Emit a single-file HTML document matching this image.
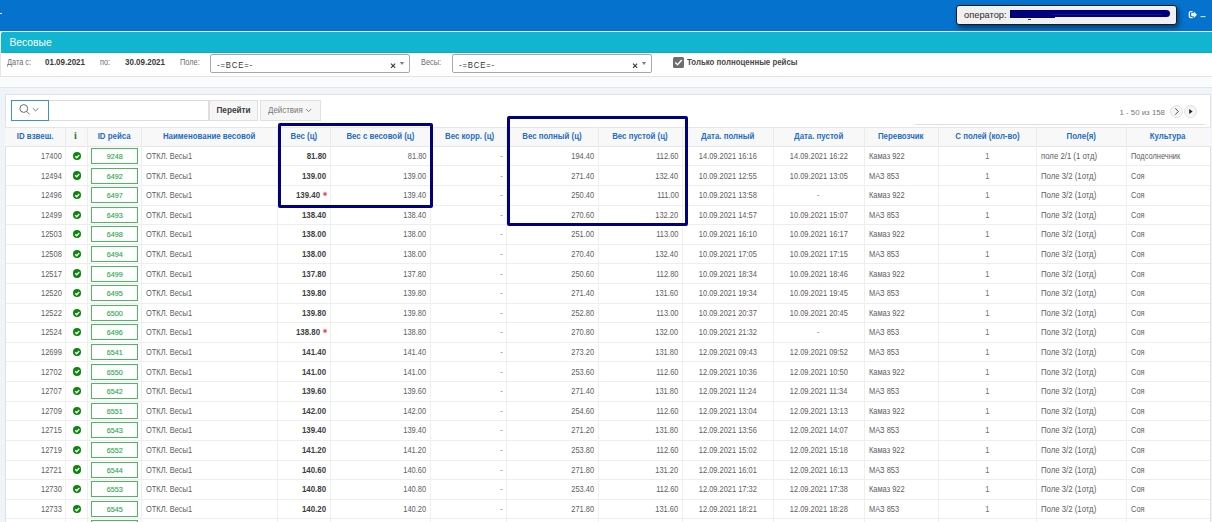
<!DOCTYPE html><html><head><meta charset="utf-8"><style>
*{box-sizing:border-box;margin:0;padding:0}
html,body{width:1212px;height:522px;overflow:hidden;background:#f0f4f9;font-family:"Liberation Sans",sans-serif;color:#404040}
.a{position:absolute}
.t{display:inline-block;transform-origin:0 50%}
.r .t{transform-origin:100% 50%}
.m .t{transform-origin:50% 50%}
.topbar{left:0;top:0;width:1212px;height:31px;background:#0572ce}
.tline{left:0;top:31px;width:1212px;height:1px;background:#e4e7ea}
.teal{left:1px;top:32px;width:1211px;height:21px;background:#12b5d0;border-top-left-radius:2px;border-bottom:1px solid #0eabc5}
.ttl{left:9.5px;top:32px;height:21px;line-height:21px;font-size:10.3px;color:#fff}
.fpanel{left:0;top:53px;width:1212px;height:24px;background:#fff;border-left:1px solid #e6e6e6;border-bottom:1px solid #e2e2e2}
.band{left:0;top:77px;width:1212px;height:11px;background:#fafbfc;border-bottom:1px solid #e3e6ea}
.lbl{font-size:8.2px;color:#6b6b6b;line-height:10px}
.lbl .t{transform:scaleX(.9)}
.bld{font-size:8.2px;font-weight:bold;color:#3a3a3a;line-height:10px}
.bld .t{transform:scaleX(.975)}
.sel{background:#fff;border:1px solid #a8a8a8;border-radius:2px}
.selt{font-size:9.7px;color:#333;line-height:10px;letter-spacing:1.1px}
.selt .t{transform:scaleX(.8)}
.tpanel{left:5px;top:94px;width:1206px;height:440px;background:#fff;border:1px solid #e2e2e2}
.btn{background:#f6f6f6;border:1px solid #e0e0e0;font-size:8.2px;line-height:19px;text-align:center}
.btn .t{transform:scaleX(.97)}
.hdr{left:5px;top:127px;width:1206px;height:20px;background:#f8f8f8;border-top:1px solid #e6e6e6;border-bottom:1px solid #e6e6e6}
.hl{top:127px;height:20px;width:1px;background:#ebebeb}
.ht{top:127.0px;height:20px;line-height:20px;font-size:8.2px;font-weight:bold;color:#1f6dc4;text-align:center;white-space:nowrap}
.ht .t{transform:scaleX(0.96);transform-origin:50% 50%}
.rl{height:1px;background:#eeeeee;left:6px;width:1204px}
.vl{width:1px;background:#efefef}
.c{line-height:20px;font-size:8.2px;color:#5e5e5e;white-space:nowrap}
.c .t{transform:scaleX(0.91)}
.r{text-align:right}
.dash{color:#8a8a8a}
.one{color:#707070}
.c.fld .t{transform:scaleX(.95)}
.m{text-align:center}
.b{font-weight:bold;font-size:8.2px;color:#3f3f3f}
.c.b .t{transform:scaleX(0.965)}
.gb{border:1px solid #4cb860;color:#2aa74a;font-size:7.8px;text-align:center;line-height:16.6px;-webkit-text-stroke:0.12px #2aa74a}
.gb .t{transform:scaleX(.92);transform-origin:50% 50%}
.chk{width:8.2px;height:8.2px;border-radius:50%;background:#0a870a}
.box{border:3px solid #000080;border-radius:2px}
</style></head><body>
<div class="a topbar"></div><div class="a tline"></div>
<div class="a" style="left:955.8px;top:4.8px;width:221px;height:19.8px;background:#f0f0f0;border:1px solid #1a1a1a;border-radius:3px;box-shadow:2px 3px 5px rgba(0,0,0,.45)"></div>
<div class="a" style="left:964px;top:6px;height:19.5px;line-height:19.5px;font-size:9.3px;color:#2a2a2a">оператор:</div>
<div class="a" style="left:1009.8px;top:9.8px;width:45px;height:8.4px;background:#00007c"></div>
<div class="a" style="left:1050px;top:9.8px;width:120px;height:7.6px;background:#00007c;border-radius:1px 4px 4px 1px"></div>
<div class="a" style="left:1052px;top:13.6px;width:110px;height:0.6px;background:#15158a"></div>
<div class="a" style="left:1028px;top:18.6px;width:3px;height:0.8px;background:#333"></div>
<svg class="a" style="left:1186px;top:9px" width="22" height="12"><path d="M6.6 2.7 H4.7 Q3.3 2.7 3.3 4.1 V7.2 Q3.3 8.6 4.7 8.6 H6.6" stroke="#f4f8fd" stroke-width="1.3" fill="none"/><path d="M5.2 4.1 H7.8 V2.4 L11 5.65 L7.8 8.9 V7.2 H5.2 Z" fill="#f4f8fd"/><path d="M14.6 7.6 H19.5" stroke="#d6e4f5" stroke-width="1.1"/></svg>
<div class="a" style="left:0;top:13px;width:1.5px;height:1px;background:#f4f0f0"></div>
<div class="a teal"></div><div class="a ttl">Весовые</div>
<div class="a fpanel"></div><div class="a band"></div>
<div class="a lbl" style="left:7px;top:57.5px"><span class="t">Дата с:</span></div>
<div class="a bld" style="left:45px;top:57.5px"><span class="t">01.09.2021</span></div>
<div class="a lbl" style="left:100px;top:57.5px"><span class="t">по:</span></div>
<div class="a bld" style="left:124.5px;top:57.5px"><span class="t">30.09.2021</span></div>
<div class="a lbl" style="left:180px;top:57.5px"><span class="t">Поле:</span></div>
<div class="a sel" style="left:210px;top:54px;width:199.5px;height:18.5px"></div>
<div class="a selt" style="left:217px;top:59.5px"><span class="t">-=ВСЕ=-</span></div>
<svg class="a" style="left:389.5px;top:60px" width="20" height="10"><path d="M1 3.6 L5.2 7.8 M5.2 3.6 L1 7.8" stroke="#333" stroke-width="1.05"/><path d="M9.8 1.9 H14.2 L12 5 Z" fill="#808080"/></svg>
<div class="a lbl" style="left:421px;top:57.5px"><span class="t">Весы:</span></div>
<div class="a sel" style="left:452px;top:54px;width:199.5px;height:18.5px"></div>
<div class="a selt" style="left:459px;top:59.5px"><span class="t">-=ВСЕ=-</span></div>
<svg class="a" style="left:631.5px;top:60px" width="20" height="10"><path d="M1 3.6 L5.2 7.8 M5.2 3.6 L1 7.8" stroke="#333" stroke-width="1.05"/><path d="M9.8 1.9 H14.2 L12 5 Z" fill="#808080"/></svg>
<div class="a" style="left:673px;top:56.5px;width:11px;height:11px;background:#6e6e6e;border-radius:1.5px"></div>
<svg class="a" style="left:673px;top:56.5px" width="11" height="11"><path d="M2.3 5.6 L4.5 7.8 L8.8 3" stroke="#fff" stroke-width="1.4" fill="none"/></svg>
<div class="a bld" style="left:686.5px;top:57.5px;color:#4a4a4a"><span class="t" style="transform:scaleX(.96)">Только полноценные рейсы</span></div>
<div class="a tpanel"></div>
<div class="a" style="left:49px;top:100px;width:160px;height:21px;border:1px solid #dcdcdc;border-left:none"></div>
<div class="a" style="left:11px;top:100px;width:38px;height:21px;border:1px solid #3b8ee0;background:#fff"></div>
<svg class="a" style="left:17px;top:102px" width="26" height="16"><circle cx="6.8" cy="6.5" r="3.9" stroke="#555" stroke-width="0.85" fill="none"/><path d="M9.6 9.3 L12.6 12.3" stroke="#555" stroke-width="0.85"/><path d="M15.8 6.2 L18.6 8.9 L21.5 6.2" stroke="#555" stroke-width="0.8" fill="none"/></svg>
<div class="a btn" style="left:208.5px;top:100px;width:49px;height:20.5px;font-weight:bold;color:#3c3c3c;padding-left:1px">Перейти</div>
<div class="a btn" style="left:260px;top:100px;width:60.5px;height:20.5px;color:#777;text-align:left;padding-left:7px"><span class="t">Действия</span></div>
<svg class="a" style="left:304.5px;top:107.5px" width="8" height="6"><path d="M1 1 L3.6 3.6 L6.2 1" stroke="#666" stroke-width="0.8" fill="none"/></svg>
<div class="a" style="left:1119.5px;top:107.5px;font-size:7.85px;color:#777;line-height:10px">1 - 50 из 158</div>
<div class="a" style="left:1170px;top:105px;width:13.2px;height:13.2px;border-radius:50%;background:#f5f5f5;border:1px solid #e2e2e2"></div>
<svg class="a" style="left:1170px;top:105px" width="13" height="13"><path d="M5.3 3.3 L8.3 6.5 L5.3 9.7" stroke="#444" stroke-width="0.9" fill="none"/></svg>
<div class="a" style="left:1184px;top:105px;width:13px;height:13.2px;border-radius:50%;background:#f5f5f5;border:1px solid #e2e2e2"></div>
<svg class="a" style="left:1184px;top:105px" width="13" height="13"><path d="M5.2 4 L8.6 6.5 L5.2 9 Z" fill="#222"/></svg>
<div class="a" style="left:915px;top:124px;width:290px;height:1px;background:#dedede"></div>
<div class="a hdr"></div>
<div class="a hl" style="left:65px"></div>
<div class="a hl" style="left:87px"></div>
<div class="a hl" style="left:141px"></div>
<div class="a hl" style="left:277px"></div>
<div class="a hl" style="left:330px"></div>
<div class="a hl" style="left:430px"></div>
<div class="a hl" style="left:506px"></div>
<div class="a hl" style="left:598px"></div>
<div class="a hl" style="left:682px"></div>
<div class="a hl" style="left:773px"></div>
<div class="a hl" style="left:864px"></div>
<div class="a hl" style="left:938px"></div>
<div class="a hl" style="left:1036px"></div>
<div class="a hl" style="left:1126px"></div>
<div class="a ht" style="left:5.0px;width:60px"><span class="t">ID взвеш.</span></div>
<div class="a ht" style="left:87.0px;width:54px"><span class="t">ID рейса</span></div>
<div class="a ht" style="left:141.0px;width:136px"><span class="t">Наименование весовой</span></div>
<div class="a ht" style="left:277.0px;width:53px"><span class="t">Вес (ц)</span></div>
<div class="a ht" style="left:330.0px;width:100px"><span class="t">Вес с весовой (ц)</span></div>
<div class="a ht" style="left:431.5px;width:76px"><span class="t">Вес корр. (ц)</span></div>
<div class="a ht" style="left:506.0px;width:92px"><span class="t">Вес полный (ц)</span></div>
<div class="a ht" style="left:598.0px;width:84px"><span class="t">Вес пустой (ц)</span></div>
<div class="a ht" style="left:682.0px;width:91px"><span class="t">Дата. полный</span></div>
<div class="a ht" style="left:773.0px;width:91px"><span class="t">Дата. пустой</span></div>
<div class="a ht" style="left:864.0px;width:74px"><span class="t">Перевозчик</span></div>
<div class="a ht" style="left:938.0px;width:98px"><span class="t">С полей (кол-во)</span></div>
<div class="a ht" style="left:1036.0px;width:90px"><span class="t">Поле(я)</span></div>
<div class="a ht" style="left:1126.0px;width:84px"><span class="t">Культура</span></div>
<div class="a" style="left:74px;top:131.5px;font-family:'Liberation Serif',serif;font-weight:bold;font-size:10px;line-height:8px;color:#1a7a2a">i</div>
<div class="a rl" style="top:165px"></div>
<div class="a c r" style="left:5px;top:147.00px;width:60px;padding:0 3.5px"><span class="t">17400</span></div>
<div class="a chk" style="left:72.7px;top:151.80px"></div>
<svg class="a" style="left:72.7px;top:151.80px" width="9" height="9"><path d="M2.2 4.3 L3.7 5.8 L6.2 3" stroke="#fff" stroke-width="1.3" fill="none"/></svg>
<div class="a gb" style="left:91px;top:148.00px;width:47px;height:16px"><span class="t">9248</span></div>
<div class="a c " style="left:141px;top:147.00px;width:136px;padding:0 4.5px"><span class="t">ОТКЛ. Весы1</span></div>
<div class="a c r b" style="left:277px;top:147.00px;width:53px;padding:0 3.5px"><span class="t">81.80</span></div>
<div class="a c r" style="left:330px;top:147.00px;width:100px;padding:0 3.5px"><span class="t">81.80</span></div>
<div class="a c r dash" style="left:430px;top:147.00px;width:76px;padding:0 3.5px"><span class="t">-</span></div>
<div class="a c r" style="left:506px;top:147.00px;width:92px;padding:0 3.5px"><span class="t">194.40</span></div>
<div class="a c r" style="left:598px;top:147.00px;width:84px;padding:0 3.5px"><span class="t">112.60</span></div>
<div class="a c m" style="left:682px;top:147.00px;width:91px;padding:0 0.0px"><span class="t">14.09.2021 16:16</span></div>
<div class="a c m" style="left:773px;top:147.00px;width:91px;padding:0 0.0px"><span class="t">14.09.2021 16:22</span></div>
<div class="a c " style="left:864px;top:147.00px;width:74px;padding:0 4.5px"><span class="t">Камаз 922</span></div>
<div class="a c m one" style="left:938px;top:147.00px;width:98px;padding:0 0.0px"><span class="t">1</span></div>
<div class="a c fld" style="left:1036px;top:147.00px;width:90px;padding:0 4.5px"><span class="t">поле 2/1 (1 отд)</span></div>
<div class="a c " style="left:1126px;top:147.00px;width:84px;padding:0 4.5px"><span class="t">Подсолнечник</span></div>
<div class="a rl" style="top:185px"></div>
<div class="a c r" style="left:5px;top:166.60px;width:60px;padding:0 3.5px"><span class="t">12494</span></div>
<div class="a chk" style="left:72.7px;top:171.40px"></div>
<svg class="a" style="left:72.7px;top:171.40px" width="9" height="9"><path d="M2.2 4.3 L3.7 5.8 L6.2 3" stroke="#fff" stroke-width="1.3" fill="none"/></svg>
<div class="a gb" style="left:91px;top:167.60px;width:47px;height:16px"><span class="t">6492</span></div>
<div class="a c " style="left:141px;top:166.60px;width:136px;padding:0 4.5px"><span class="t">ОТКЛ. Весы1</span></div>
<div class="a c r b" style="left:277px;top:166.60px;width:53px;padding:0 3.5px"><span class="t">139.00</span></div>
<div class="a c r" style="left:330px;top:166.60px;width:100px;padding:0 3.5px"><span class="t">139.00</span></div>
<div class="a c r dash" style="left:430px;top:166.60px;width:76px;padding:0 3.5px"><span class="t">-</span></div>
<div class="a c r" style="left:506px;top:166.60px;width:92px;padding:0 3.5px"><span class="t">271.40</span></div>
<div class="a c r" style="left:598px;top:166.60px;width:84px;padding:0 3.5px"><span class="t">132.40</span></div>
<div class="a c m" style="left:682px;top:166.60px;width:91px;padding:0 0.0px"><span class="t">10.09.2021 12:55</span></div>
<div class="a c m" style="left:773px;top:166.60px;width:91px;padding:0 0.0px"><span class="t">10.09.2021 13:05</span></div>
<div class="a c " style="left:864px;top:166.60px;width:74px;padding:0 4.5px"><span class="t">МАЗ 853</span></div>
<div class="a c m one" style="left:938px;top:166.60px;width:98px;padding:0 0.0px"><span class="t">1</span></div>
<div class="a c fld" style="left:1036px;top:166.60px;width:90px;padding:0 4.5px"><span class="t">Поле 3/2 (1отд)</span></div>
<div class="a c " style="left:1126px;top:166.60px;width:84px;padding:0 4.5px"><span class="t">Соя</span></div>
<div class="a rl" style="top:205px"></div>
<div class="a c r" style="left:5px;top:186.20px;width:60px;padding:0 3.5px"><span class="t">12496</span></div>
<div class="a chk" style="left:72.7px;top:191.00px"></div>
<svg class="a" style="left:72.7px;top:191.00px" width="9" height="9"><path d="M2.2 4.3 L3.7 5.8 L6.2 3" stroke="#fff" stroke-width="1.3" fill="none"/></svg>
<div class="a gb" style="left:91px;top:187.20px;width:47px;height:16px"><span class="t">6497</span></div>
<div class="a c " style="left:141px;top:186.20px;width:136px;padding:0 4.5px"><span class="t">ОТКЛ. Весы1</span></div>
<div class="a c r b" style="left:277px;top:186.20px;width:53px;padding:0 10px 0 0"><span class="t">139.40</span></div>
<svg class="a" style="left:322px;top:191.20px" width="6" height="6"><path d="M3 0.8 V5.2 M1.1 1.9 L4.9 4.1 M4.9 1.9 L1.1 4.1" stroke="#e8303a" stroke-width="0.9"/></svg>
<div class="a c r" style="left:330px;top:186.20px;width:100px;padding:0 3.5px"><span class="t">139.40</span></div>
<div class="a c r dash" style="left:430px;top:186.20px;width:76px;padding:0 3.5px"><span class="t">-</span></div>
<div class="a c r" style="left:506px;top:186.20px;width:92px;padding:0 3.5px"><span class="t">250.40</span></div>
<div class="a c r" style="left:598px;top:186.20px;width:84px;padding:0 3.5px"><span class="t">111.00</span></div>
<div class="a c m" style="left:682px;top:186.20px;width:91px;padding:0 0.0px"><span class="t">10.09.2021 13:58</span></div>
<div class="a c m dash" style="left:773px;top:186.20px;width:91px;padding:0 0.0px"><span class="t">-</span></div>
<div class="a c " style="left:864px;top:186.20px;width:74px;padding:0 4.5px"><span class="t">Камаз 922</span></div>
<div class="a c m one" style="left:938px;top:186.20px;width:98px;padding:0 0.0px"><span class="t">1</span></div>
<div class="a c fld" style="left:1036px;top:186.20px;width:90px;padding:0 4.5px"><span class="t">Поле 3/2 (1отд)</span></div>
<div class="a c " style="left:1126px;top:186.20px;width:84px;padding:0 4.5px"><span class="t">Соя</span></div>
<div class="a rl" style="top:224px"></div>
<div class="a c r" style="left:5px;top:205.80px;width:60px;padding:0 3.5px"><span class="t">12499</span></div>
<div class="a chk" style="left:72.7px;top:210.60px"></div>
<svg class="a" style="left:72.7px;top:210.60px" width="9" height="9"><path d="M2.2 4.3 L3.7 5.8 L6.2 3" stroke="#fff" stroke-width="1.3" fill="none"/></svg>
<div class="a gb" style="left:91px;top:206.80px;width:47px;height:16px"><span class="t">6493</span></div>
<div class="a c " style="left:141px;top:205.80px;width:136px;padding:0 4.5px"><span class="t">ОТКЛ. Весы1</span></div>
<div class="a c r b" style="left:277px;top:205.80px;width:53px;padding:0 3.5px"><span class="t">138.40</span></div>
<div class="a c r" style="left:330px;top:205.80px;width:100px;padding:0 3.5px"><span class="t">138.40</span></div>
<div class="a c r dash" style="left:430px;top:205.80px;width:76px;padding:0 3.5px"><span class="t">-</span></div>
<div class="a c r" style="left:506px;top:205.80px;width:92px;padding:0 3.5px"><span class="t">270.60</span></div>
<div class="a c r" style="left:598px;top:205.80px;width:84px;padding:0 3.5px"><span class="t">132.20</span></div>
<div class="a c m" style="left:682px;top:205.80px;width:91px;padding:0 0.0px"><span class="t">10.09.2021 14:57</span></div>
<div class="a c m" style="left:773px;top:205.80px;width:91px;padding:0 0.0px"><span class="t">10.09.2021 15:07</span></div>
<div class="a c " style="left:864px;top:205.80px;width:74px;padding:0 4.5px"><span class="t">МАЗ 853</span></div>
<div class="a c m one" style="left:938px;top:205.80px;width:98px;padding:0 0.0px"><span class="t">1</span></div>
<div class="a c fld" style="left:1036px;top:205.80px;width:90px;padding:0 4.5px"><span class="t">Поле 3/2 (1отд)</span></div>
<div class="a c " style="left:1126px;top:205.80px;width:84px;padding:0 4.5px"><span class="t">Соя</span></div>
<div class="a rl" style="top:244px"></div>
<div class="a c r" style="left:5px;top:225.40px;width:60px;padding:0 3.5px"><span class="t">12503</span></div>
<div class="a chk" style="left:72.7px;top:230.20px"></div>
<svg class="a" style="left:72.7px;top:230.20px" width="9" height="9"><path d="M2.2 4.3 L3.7 5.8 L6.2 3" stroke="#fff" stroke-width="1.3" fill="none"/></svg>
<div class="a gb" style="left:91px;top:226.40px;width:47px;height:16px"><span class="t">6498</span></div>
<div class="a c " style="left:141px;top:225.40px;width:136px;padding:0 4.5px"><span class="t">ОТКЛ. Весы1</span></div>
<div class="a c r b" style="left:277px;top:225.40px;width:53px;padding:0 3.5px"><span class="t">138.00</span></div>
<div class="a c r" style="left:330px;top:225.40px;width:100px;padding:0 3.5px"><span class="t">138.00</span></div>
<div class="a c r dash" style="left:430px;top:225.40px;width:76px;padding:0 3.5px"><span class="t">-</span></div>
<div class="a c r" style="left:506px;top:225.40px;width:92px;padding:0 3.5px"><span class="t">251.00</span></div>
<div class="a c r" style="left:598px;top:225.40px;width:84px;padding:0 3.5px"><span class="t">113.00</span></div>
<div class="a c m" style="left:682px;top:225.40px;width:91px;padding:0 0.0px"><span class="t">10.09.2021 16:10</span></div>
<div class="a c m" style="left:773px;top:225.40px;width:91px;padding:0 0.0px"><span class="t">10.09.2021 16:17</span></div>
<div class="a c " style="left:864px;top:225.40px;width:74px;padding:0 4.5px"><span class="t">Камаз 922</span></div>
<div class="a c m one" style="left:938px;top:225.40px;width:98px;padding:0 0.0px"><span class="t">1</span></div>
<div class="a c fld" style="left:1036px;top:225.40px;width:90px;padding:0 4.5px"><span class="t">Поле 3/2 (1отд)</span></div>
<div class="a c " style="left:1126px;top:225.40px;width:84px;padding:0 4.5px"><span class="t">Соя</span></div>
<div class="a rl" style="top:263px"></div>
<div class="a c r" style="left:5px;top:245.00px;width:60px;padding:0 3.5px"><span class="t">12508</span></div>
<div class="a chk" style="left:72.7px;top:249.80px"></div>
<svg class="a" style="left:72.7px;top:249.80px" width="9" height="9"><path d="M2.2 4.3 L3.7 5.8 L6.2 3" stroke="#fff" stroke-width="1.3" fill="none"/></svg>
<div class="a gb" style="left:91px;top:246.00px;width:47px;height:16px"><span class="t">6494</span></div>
<div class="a c " style="left:141px;top:245.00px;width:136px;padding:0 4.5px"><span class="t">ОТКЛ. Весы1</span></div>
<div class="a c r b" style="left:277px;top:245.00px;width:53px;padding:0 3.5px"><span class="t">138.00</span></div>
<div class="a c r" style="left:330px;top:245.00px;width:100px;padding:0 3.5px"><span class="t">138.00</span></div>
<div class="a c r dash" style="left:430px;top:245.00px;width:76px;padding:0 3.5px"><span class="t">-</span></div>
<div class="a c r" style="left:506px;top:245.00px;width:92px;padding:0 3.5px"><span class="t">270.40</span></div>
<div class="a c r" style="left:598px;top:245.00px;width:84px;padding:0 3.5px"><span class="t">132.40</span></div>
<div class="a c m" style="left:682px;top:245.00px;width:91px;padding:0 0.0px"><span class="t">10.09.2021 17:05</span></div>
<div class="a c m" style="left:773px;top:245.00px;width:91px;padding:0 0.0px"><span class="t">10.09.2021 17:15</span></div>
<div class="a c " style="left:864px;top:245.00px;width:74px;padding:0 4.5px"><span class="t">МАЗ 853</span></div>
<div class="a c m one" style="left:938px;top:245.00px;width:98px;padding:0 0.0px"><span class="t">1</span></div>
<div class="a c fld" style="left:1036px;top:245.00px;width:90px;padding:0 4.5px"><span class="t">Поле 3/2 (1отд)</span></div>
<div class="a c " style="left:1126px;top:245.00px;width:84px;padding:0 4.5px"><span class="t">Соя</span></div>
<div class="a rl" style="top:283px"></div>
<div class="a c r" style="left:5px;top:264.60px;width:60px;padding:0 3.5px"><span class="t">12517</span></div>
<div class="a chk" style="left:72.7px;top:269.40px"></div>
<svg class="a" style="left:72.7px;top:269.40px" width="9" height="9"><path d="M2.2 4.3 L3.7 5.8 L6.2 3" stroke="#fff" stroke-width="1.3" fill="none"/></svg>
<div class="a gb" style="left:91px;top:265.60px;width:47px;height:16px"><span class="t">6499</span></div>
<div class="a c " style="left:141px;top:264.60px;width:136px;padding:0 4.5px"><span class="t">ОТКЛ. Весы1</span></div>
<div class="a c r b" style="left:277px;top:264.60px;width:53px;padding:0 3.5px"><span class="t">137.80</span></div>
<div class="a c r" style="left:330px;top:264.60px;width:100px;padding:0 3.5px"><span class="t">137.80</span></div>
<div class="a c r dash" style="left:430px;top:264.60px;width:76px;padding:0 3.5px"><span class="t">-</span></div>
<div class="a c r" style="left:506px;top:264.60px;width:92px;padding:0 3.5px"><span class="t">250.60</span></div>
<div class="a c r" style="left:598px;top:264.60px;width:84px;padding:0 3.5px"><span class="t">112.80</span></div>
<div class="a c m" style="left:682px;top:264.60px;width:91px;padding:0 0.0px"><span class="t">10.09.2021 18:34</span></div>
<div class="a c m" style="left:773px;top:264.60px;width:91px;padding:0 0.0px"><span class="t">10.09.2021 18:46</span></div>
<div class="a c " style="left:864px;top:264.60px;width:74px;padding:0 4.5px"><span class="t">Камаз 922</span></div>
<div class="a c m one" style="left:938px;top:264.60px;width:98px;padding:0 0.0px"><span class="t">1</span></div>
<div class="a c fld" style="left:1036px;top:264.60px;width:90px;padding:0 4.5px"><span class="t">Поле 3/2 (1отд)</span></div>
<div class="a c " style="left:1126px;top:264.60px;width:84px;padding:0 4.5px"><span class="t">Соя</span></div>
<div class="a rl" style="top:303px"></div>
<div class="a c r" style="left:5px;top:284.20px;width:60px;padding:0 3.5px"><span class="t">12520</span></div>
<div class="a chk" style="left:72.7px;top:289.00px"></div>
<svg class="a" style="left:72.7px;top:289.00px" width="9" height="9"><path d="M2.2 4.3 L3.7 5.8 L6.2 3" stroke="#fff" stroke-width="1.3" fill="none"/></svg>
<div class="a gb" style="left:91px;top:285.20px;width:47px;height:16px"><span class="t">6495</span></div>
<div class="a c " style="left:141px;top:284.20px;width:136px;padding:0 4.5px"><span class="t">ОТКЛ. Весы1</span></div>
<div class="a c r b" style="left:277px;top:284.20px;width:53px;padding:0 3.5px"><span class="t">139.80</span></div>
<div class="a c r" style="left:330px;top:284.20px;width:100px;padding:0 3.5px"><span class="t">139.80</span></div>
<div class="a c r dash" style="left:430px;top:284.20px;width:76px;padding:0 3.5px"><span class="t">-</span></div>
<div class="a c r" style="left:506px;top:284.20px;width:92px;padding:0 3.5px"><span class="t">271.40</span></div>
<div class="a c r" style="left:598px;top:284.20px;width:84px;padding:0 3.5px"><span class="t">131.60</span></div>
<div class="a c m" style="left:682px;top:284.20px;width:91px;padding:0 0.0px"><span class="t">10.09.2021 19:34</span></div>
<div class="a c m" style="left:773px;top:284.20px;width:91px;padding:0 0.0px"><span class="t">10.09.2021 19:45</span></div>
<div class="a c " style="left:864px;top:284.20px;width:74px;padding:0 4.5px"><span class="t">МАЗ 853</span></div>
<div class="a c m one" style="left:938px;top:284.20px;width:98px;padding:0 0.0px"><span class="t">1</span></div>
<div class="a c fld" style="left:1036px;top:284.20px;width:90px;padding:0 4.5px"><span class="t">Поле 3/2 (1отд)</span></div>
<div class="a c " style="left:1126px;top:284.20px;width:84px;padding:0 4.5px"><span class="t">Соя</span></div>
<div class="a rl" style="top:322px"></div>
<div class="a c r" style="left:5px;top:303.80px;width:60px;padding:0 3.5px"><span class="t">12522</span></div>
<div class="a chk" style="left:72.7px;top:308.60px"></div>
<svg class="a" style="left:72.7px;top:308.60px" width="9" height="9"><path d="M2.2 4.3 L3.7 5.8 L6.2 3" stroke="#fff" stroke-width="1.3" fill="none"/></svg>
<div class="a gb" style="left:91px;top:304.80px;width:47px;height:16px"><span class="t">6500</span></div>
<div class="a c " style="left:141px;top:303.80px;width:136px;padding:0 4.5px"><span class="t">ОТКЛ. Весы1</span></div>
<div class="a c r b" style="left:277px;top:303.80px;width:53px;padding:0 3.5px"><span class="t">139.80</span></div>
<div class="a c r" style="left:330px;top:303.80px;width:100px;padding:0 3.5px"><span class="t">139.80</span></div>
<div class="a c r dash" style="left:430px;top:303.80px;width:76px;padding:0 3.5px"><span class="t">-</span></div>
<div class="a c r" style="left:506px;top:303.80px;width:92px;padding:0 3.5px"><span class="t">252.80</span></div>
<div class="a c r" style="left:598px;top:303.80px;width:84px;padding:0 3.5px"><span class="t">113.00</span></div>
<div class="a c m" style="left:682px;top:303.80px;width:91px;padding:0 0.0px"><span class="t">10.09.2021 20:37</span></div>
<div class="a c m" style="left:773px;top:303.80px;width:91px;padding:0 0.0px"><span class="t">10.09.2021 20:45</span></div>
<div class="a c " style="left:864px;top:303.80px;width:74px;padding:0 4.5px"><span class="t">Камаз 922</span></div>
<div class="a c m one" style="left:938px;top:303.80px;width:98px;padding:0 0.0px"><span class="t">1</span></div>
<div class="a c fld" style="left:1036px;top:303.80px;width:90px;padding:0 4.5px"><span class="t">Поле 3/2 (1отд)</span></div>
<div class="a c " style="left:1126px;top:303.80px;width:84px;padding:0 4.5px"><span class="t">Соя</span></div>
<div class="a rl" style="top:342px"></div>
<div class="a c r" style="left:5px;top:323.40px;width:60px;padding:0 3.5px"><span class="t">12524</span></div>
<div class="a chk" style="left:72.7px;top:328.20px"></div>
<svg class="a" style="left:72.7px;top:328.20px" width="9" height="9"><path d="M2.2 4.3 L3.7 5.8 L6.2 3" stroke="#fff" stroke-width="1.3" fill="none"/></svg>
<div class="a gb" style="left:91px;top:324.40px;width:47px;height:16px"><span class="t">6496</span></div>
<div class="a c " style="left:141px;top:323.40px;width:136px;padding:0 4.5px"><span class="t">ОТКЛ. Весы1</span></div>
<div class="a c r b" style="left:277px;top:323.40px;width:53px;padding:0 10px 0 0"><span class="t">138.80</span></div>
<svg class="a" style="left:322px;top:328.40px" width="6" height="6"><path d="M3 0.8 V5.2 M1.1 1.9 L4.9 4.1 M4.9 1.9 L1.1 4.1" stroke="#e8303a" stroke-width="0.9"/></svg>
<div class="a c r" style="left:330px;top:323.40px;width:100px;padding:0 3.5px"><span class="t">138.80</span></div>
<div class="a c r dash" style="left:430px;top:323.40px;width:76px;padding:0 3.5px"><span class="t">-</span></div>
<div class="a c r" style="left:506px;top:323.40px;width:92px;padding:0 3.5px"><span class="t">270.80</span></div>
<div class="a c r" style="left:598px;top:323.40px;width:84px;padding:0 3.5px"><span class="t">132.00</span></div>
<div class="a c m" style="left:682px;top:323.40px;width:91px;padding:0 0.0px"><span class="t">10.09.2021 21:32</span></div>
<div class="a c m dash" style="left:773px;top:323.40px;width:91px;padding:0 0.0px"><span class="t">-</span></div>
<div class="a c " style="left:864px;top:323.40px;width:74px;padding:0 4.5px"><span class="t">МАЗ 853</span></div>
<div class="a c m one" style="left:938px;top:323.40px;width:98px;padding:0 0.0px"><span class="t">1</span></div>
<div class="a c fld" style="left:1036px;top:323.40px;width:90px;padding:0 4.5px"><span class="t">Поле 3/2 (1отд)</span></div>
<div class="a c " style="left:1126px;top:323.40px;width:84px;padding:0 4.5px"><span class="t">Соя</span></div>
<div class="a rl" style="top:361px"></div>
<div class="a c r" style="left:5px;top:343.00px;width:60px;padding:0 3.5px"><span class="t">12699</span></div>
<div class="a chk" style="left:72.7px;top:347.80px"></div>
<svg class="a" style="left:72.7px;top:347.80px" width="9" height="9"><path d="M2.2 4.3 L3.7 5.8 L6.2 3" stroke="#fff" stroke-width="1.3" fill="none"/></svg>
<div class="a gb" style="left:91px;top:344.00px;width:47px;height:16px"><span class="t">6541</span></div>
<div class="a c " style="left:141px;top:343.00px;width:136px;padding:0 4.5px"><span class="t">ОТКЛ. Весы1</span></div>
<div class="a c r b" style="left:277px;top:343.00px;width:53px;padding:0 3.5px"><span class="t">141.40</span></div>
<div class="a c r" style="left:330px;top:343.00px;width:100px;padding:0 3.5px"><span class="t">141.40</span></div>
<div class="a c r dash" style="left:430px;top:343.00px;width:76px;padding:0 3.5px"><span class="t">-</span></div>
<div class="a c r" style="left:506px;top:343.00px;width:92px;padding:0 3.5px"><span class="t">273.20</span></div>
<div class="a c r" style="left:598px;top:343.00px;width:84px;padding:0 3.5px"><span class="t">131.80</span></div>
<div class="a c m" style="left:682px;top:343.00px;width:91px;padding:0 0.0px"><span class="t">12.09.2021 09:43</span></div>
<div class="a c m" style="left:773px;top:343.00px;width:91px;padding:0 0.0px"><span class="t">12.09.2021 09:52</span></div>
<div class="a c " style="left:864px;top:343.00px;width:74px;padding:0 4.5px"><span class="t">МАЗ 853</span></div>
<div class="a c m one" style="left:938px;top:343.00px;width:98px;padding:0 0.0px"><span class="t">1</span></div>
<div class="a c fld" style="left:1036px;top:343.00px;width:90px;padding:0 4.5px"><span class="t">Поле 3/2 (1отд)</span></div>
<div class="a c " style="left:1126px;top:343.00px;width:84px;padding:0 4.5px"><span class="t">Соя</span></div>
<div class="a rl" style="top:381px"></div>
<div class="a c r" style="left:5px;top:362.60px;width:60px;padding:0 3.5px"><span class="t">12702</span></div>
<div class="a chk" style="left:72.7px;top:367.40px"></div>
<svg class="a" style="left:72.7px;top:367.40px" width="9" height="9"><path d="M2.2 4.3 L3.7 5.8 L6.2 3" stroke="#fff" stroke-width="1.3" fill="none"/></svg>
<div class="a gb" style="left:91px;top:363.60px;width:47px;height:16px"><span class="t">6550</span></div>
<div class="a c " style="left:141px;top:362.60px;width:136px;padding:0 4.5px"><span class="t">ОТКЛ. Весы1</span></div>
<div class="a c r b" style="left:277px;top:362.60px;width:53px;padding:0 3.5px"><span class="t">141.00</span></div>
<div class="a c r" style="left:330px;top:362.60px;width:100px;padding:0 3.5px"><span class="t">141.00</span></div>
<div class="a c r dash" style="left:430px;top:362.60px;width:76px;padding:0 3.5px"><span class="t">-</span></div>
<div class="a c r" style="left:506px;top:362.60px;width:92px;padding:0 3.5px"><span class="t">253.60</span></div>
<div class="a c r" style="left:598px;top:362.60px;width:84px;padding:0 3.5px"><span class="t">112.60</span></div>
<div class="a c m" style="left:682px;top:362.60px;width:91px;padding:0 0.0px"><span class="t">12.09.2021 10:36</span></div>
<div class="a c m" style="left:773px;top:362.60px;width:91px;padding:0 0.0px"><span class="t">12.09.2021 10:50</span></div>
<div class="a c " style="left:864px;top:362.60px;width:74px;padding:0 4.5px"><span class="t">Камаз 922</span></div>
<div class="a c m one" style="left:938px;top:362.60px;width:98px;padding:0 0.0px"><span class="t">1</span></div>
<div class="a c fld" style="left:1036px;top:362.60px;width:90px;padding:0 4.5px"><span class="t">Поле 3/2 (1отд)</span></div>
<div class="a c " style="left:1126px;top:362.60px;width:84px;padding:0 4.5px"><span class="t">Соя</span></div>
<div class="a rl" style="top:401px"></div>
<div class="a c r" style="left:5px;top:382.20px;width:60px;padding:0 3.5px"><span class="t">12707</span></div>
<div class="a chk" style="left:72.7px;top:387.00px"></div>
<svg class="a" style="left:72.7px;top:387.00px" width="9" height="9"><path d="M2.2 4.3 L3.7 5.8 L6.2 3" stroke="#fff" stroke-width="1.3" fill="none"/></svg>
<div class="a gb" style="left:91px;top:383.20px;width:47px;height:16px"><span class="t">6542</span></div>
<div class="a c " style="left:141px;top:382.20px;width:136px;padding:0 4.5px"><span class="t">ОТКЛ. Весы1</span></div>
<div class="a c r b" style="left:277px;top:382.20px;width:53px;padding:0 3.5px"><span class="t">139.60</span></div>
<div class="a c r" style="left:330px;top:382.20px;width:100px;padding:0 3.5px"><span class="t">139.60</span></div>
<div class="a c r dash" style="left:430px;top:382.20px;width:76px;padding:0 3.5px"><span class="t">-</span></div>
<div class="a c r" style="left:506px;top:382.20px;width:92px;padding:0 3.5px"><span class="t">271.40</span></div>
<div class="a c r" style="left:598px;top:382.20px;width:84px;padding:0 3.5px"><span class="t">131.80</span></div>
<div class="a c m" style="left:682px;top:382.20px;width:91px;padding:0 0.0px"><span class="t">12.09.2021 11:24</span></div>
<div class="a c m" style="left:773px;top:382.20px;width:91px;padding:0 0.0px"><span class="t">12.09.2021 11:34</span></div>
<div class="a c " style="left:864px;top:382.20px;width:74px;padding:0 4.5px"><span class="t">МАЗ 853</span></div>
<div class="a c m one" style="left:938px;top:382.20px;width:98px;padding:0 0.0px"><span class="t">1</span></div>
<div class="a c fld" style="left:1036px;top:382.20px;width:90px;padding:0 4.5px"><span class="t">Поле 3/2 (1отд)</span></div>
<div class="a c " style="left:1126px;top:382.20px;width:84px;padding:0 4.5px"><span class="t">Соя</span></div>
<div class="a rl" style="top:420px"></div>
<div class="a c r" style="left:5px;top:401.80px;width:60px;padding:0 3.5px"><span class="t">12709</span></div>
<div class="a chk" style="left:72.7px;top:406.60px"></div>
<svg class="a" style="left:72.7px;top:406.60px" width="9" height="9"><path d="M2.2 4.3 L3.7 5.8 L6.2 3" stroke="#fff" stroke-width="1.3" fill="none"/></svg>
<div class="a gb" style="left:91px;top:402.80px;width:47px;height:16px"><span class="t">6551</span></div>
<div class="a c " style="left:141px;top:401.80px;width:136px;padding:0 4.5px"><span class="t">ОТКЛ. Весы1</span></div>
<div class="a c r b" style="left:277px;top:401.80px;width:53px;padding:0 3.5px"><span class="t">142.00</span></div>
<div class="a c r" style="left:330px;top:401.80px;width:100px;padding:0 3.5px"><span class="t">142.00</span></div>
<div class="a c r dash" style="left:430px;top:401.80px;width:76px;padding:0 3.5px"><span class="t">-</span></div>
<div class="a c r" style="left:506px;top:401.80px;width:92px;padding:0 3.5px"><span class="t">254.60</span></div>
<div class="a c r" style="left:598px;top:401.80px;width:84px;padding:0 3.5px"><span class="t">112.60</span></div>
<div class="a c m" style="left:682px;top:401.80px;width:91px;padding:0 0.0px"><span class="t">12.09.2021 13:04</span></div>
<div class="a c m" style="left:773px;top:401.80px;width:91px;padding:0 0.0px"><span class="t">12.09.2021 13:13</span></div>
<div class="a c " style="left:864px;top:401.80px;width:74px;padding:0 4.5px"><span class="t">Камаз 922</span></div>
<div class="a c m one" style="left:938px;top:401.80px;width:98px;padding:0 0.0px"><span class="t">1</span></div>
<div class="a c fld" style="left:1036px;top:401.80px;width:90px;padding:0 4.5px"><span class="t">Поле 3/2 (1отд)</span></div>
<div class="a c " style="left:1126px;top:401.80px;width:84px;padding:0 4.5px"><span class="t">Соя</span></div>
<div class="a rl" style="top:440px"></div>
<div class="a c r" style="left:5px;top:421.40px;width:60px;padding:0 3.5px"><span class="t">12715</span></div>
<div class="a chk" style="left:72.7px;top:426.20px"></div>
<svg class="a" style="left:72.7px;top:426.20px" width="9" height="9"><path d="M2.2 4.3 L3.7 5.8 L6.2 3" stroke="#fff" stroke-width="1.3" fill="none"/></svg>
<div class="a gb" style="left:91px;top:422.40px;width:47px;height:16px"><span class="t">6543</span></div>
<div class="a c " style="left:141px;top:421.40px;width:136px;padding:0 4.5px"><span class="t">ОТКЛ. Весы1</span></div>
<div class="a c r b" style="left:277px;top:421.40px;width:53px;padding:0 3.5px"><span class="t">139.40</span></div>
<div class="a c r" style="left:330px;top:421.40px;width:100px;padding:0 3.5px"><span class="t">139.40</span></div>
<div class="a c r dash" style="left:430px;top:421.40px;width:76px;padding:0 3.5px"><span class="t">-</span></div>
<div class="a c r" style="left:506px;top:421.40px;width:92px;padding:0 3.5px"><span class="t">271.20</span></div>
<div class="a c r" style="left:598px;top:421.40px;width:84px;padding:0 3.5px"><span class="t">131.80</span></div>
<div class="a c m" style="left:682px;top:421.40px;width:91px;padding:0 0.0px"><span class="t">12.09.2021 13:56</span></div>
<div class="a c m" style="left:773px;top:421.40px;width:91px;padding:0 0.0px"><span class="t">12.09.2021 14:07</span></div>
<div class="a c " style="left:864px;top:421.40px;width:74px;padding:0 4.5px"><span class="t">МАЗ 853</span></div>
<div class="a c m one" style="left:938px;top:421.40px;width:98px;padding:0 0.0px"><span class="t">1</span></div>
<div class="a c fld" style="left:1036px;top:421.40px;width:90px;padding:0 4.5px"><span class="t">Поле 3/2 (1отд)</span></div>
<div class="a c " style="left:1126px;top:421.40px;width:84px;padding:0 4.5px"><span class="t">Соя</span></div>
<div class="a rl" style="top:460px"></div>
<div class="a c r" style="left:5px;top:441.00px;width:60px;padding:0 3.5px"><span class="t">12719</span></div>
<div class="a chk" style="left:72.7px;top:445.80px"></div>
<svg class="a" style="left:72.7px;top:445.80px" width="9" height="9"><path d="M2.2 4.3 L3.7 5.8 L6.2 3" stroke="#fff" stroke-width="1.3" fill="none"/></svg>
<div class="a gb" style="left:91px;top:442.00px;width:47px;height:16px"><span class="t">6552</span></div>
<div class="a c " style="left:141px;top:441.00px;width:136px;padding:0 4.5px"><span class="t">ОТКЛ. Весы1</span></div>
<div class="a c r b" style="left:277px;top:441.00px;width:53px;padding:0 3.5px"><span class="t">141.20</span></div>
<div class="a c r" style="left:330px;top:441.00px;width:100px;padding:0 3.5px"><span class="t">141.20</span></div>
<div class="a c r dash" style="left:430px;top:441.00px;width:76px;padding:0 3.5px"><span class="t">-</span></div>
<div class="a c r" style="left:506px;top:441.00px;width:92px;padding:0 3.5px"><span class="t">253.80</span></div>
<div class="a c r" style="left:598px;top:441.00px;width:84px;padding:0 3.5px"><span class="t">112.60</span></div>
<div class="a c m" style="left:682px;top:441.00px;width:91px;padding:0 0.0px"><span class="t">12.09.2021 15:02</span></div>
<div class="a c m" style="left:773px;top:441.00px;width:91px;padding:0 0.0px"><span class="t">12.09.2021 15:18</span></div>
<div class="a c " style="left:864px;top:441.00px;width:74px;padding:0 4.5px"><span class="t">Камаз 922</span></div>
<div class="a c m one" style="left:938px;top:441.00px;width:98px;padding:0 0.0px"><span class="t">1</span></div>
<div class="a c fld" style="left:1036px;top:441.00px;width:90px;padding:0 4.5px"><span class="t">Поле 3/2 (1отд)</span></div>
<div class="a c " style="left:1126px;top:441.00px;width:84px;padding:0 4.5px"><span class="t">Соя</span></div>
<div class="a rl" style="top:479px"></div>
<div class="a c r" style="left:5px;top:460.60px;width:60px;padding:0 3.5px"><span class="t">12721</span></div>
<div class="a chk" style="left:72.7px;top:465.40px"></div>
<svg class="a" style="left:72.7px;top:465.40px" width="9" height="9"><path d="M2.2 4.3 L3.7 5.8 L6.2 3" stroke="#fff" stroke-width="1.3" fill="none"/></svg>
<div class="a gb" style="left:91px;top:461.60px;width:47px;height:16px"><span class="t">6544</span></div>
<div class="a c " style="left:141px;top:460.60px;width:136px;padding:0 4.5px"><span class="t">ОТКЛ. Весы1</span></div>
<div class="a c r b" style="left:277px;top:460.60px;width:53px;padding:0 3.5px"><span class="t">140.60</span></div>
<div class="a c r" style="left:330px;top:460.60px;width:100px;padding:0 3.5px"><span class="t">140.60</span></div>
<div class="a c r dash" style="left:430px;top:460.60px;width:76px;padding:0 3.5px"><span class="t">-</span></div>
<div class="a c r" style="left:506px;top:460.60px;width:92px;padding:0 3.5px"><span class="t">271.80</span></div>
<div class="a c r" style="left:598px;top:460.60px;width:84px;padding:0 3.5px"><span class="t">131.20</span></div>
<div class="a c m" style="left:682px;top:460.60px;width:91px;padding:0 0.0px"><span class="t">12.09.2021 16:01</span></div>
<div class="a c m" style="left:773px;top:460.60px;width:91px;padding:0 0.0px"><span class="t">12.09.2021 16:13</span></div>
<div class="a c " style="left:864px;top:460.60px;width:74px;padding:0 4.5px"><span class="t">МАЗ 853</span></div>
<div class="a c m one" style="left:938px;top:460.60px;width:98px;padding:0 0.0px"><span class="t">1</span></div>
<div class="a c fld" style="left:1036px;top:460.60px;width:90px;padding:0 4.5px"><span class="t">Поле 3/2 (1отд)</span></div>
<div class="a c " style="left:1126px;top:460.60px;width:84px;padding:0 4.5px"><span class="t">Соя</span></div>
<div class="a rl" style="top:499px"></div>
<div class="a c r" style="left:5px;top:480.20px;width:60px;padding:0 3.5px"><span class="t">12730</span></div>
<div class="a chk" style="left:72.7px;top:485.00px"></div>
<svg class="a" style="left:72.7px;top:485.00px" width="9" height="9"><path d="M2.2 4.3 L3.7 5.8 L6.2 3" stroke="#fff" stroke-width="1.3" fill="none"/></svg>
<div class="a gb" style="left:91px;top:481.20px;width:47px;height:16px"><span class="t">6553</span></div>
<div class="a c " style="left:141px;top:480.20px;width:136px;padding:0 4.5px"><span class="t">ОТКЛ. Весы1</span></div>
<div class="a c r b" style="left:277px;top:480.20px;width:53px;padding:0 3.5px"><span class="t">140.80</span></div>
<div class="a c r" style="left:330px;top:480.20px;width:100px;padding:0 3.5px"><span class="t">140.80</span></div>
<div class="a c r dash" style="left:430px;top:480.20px;width:76px;padding:0 3.5px"><span class="t">-</span></div>
<div class="a c r" style="left:506px;top:480.20px;width:92px;padding:0 3.5px"><span class="t">253.40</span></div>
<div class="a c r" style="left:598px;top:480.20px;width:84px;padding:0 3.5px"><span class="t">112.60</span></div>
<div class="a c m" style="left:682px;top:480.20px;width:91px;padding:0 0.0px"><span class="t">12.09.2021 17:32</span></div>
<div class="a c m" style="left:773px;top:480.20px;width:91px;padding:0 0.0px"><span class="t">12.09.2021 17:38</span></div>
<div class="a c " style="left:864px;top:480.20px;width:74px;padding:0 4.5px"><span class="t">Камаз 922</span></div>
<div class="a c m one" style="left:938px;top:480.20px;width:98px;padding:0 0.0px"><span class="t">1</span></div>
<div class="a c fld" style="left:1036px;top:480.20px;width:90px;padding:0 4.5px"><span class="t">Поле 3/2 (1отд)</span></div>
<div class="a c " style="left:1126px;top:480.20px;width:84px;padding:0 4.5px"><span class="t">Соя</span></div>
<div class="a rl" style="top:518px"></div>
<div class="a c r" style="left:5px;top:499.80px;width:60px;padding:0 3.5px"><span class="t">12733</span></div>
<div class="a chk" style="left:72.7px;top:504.60px"></div>
<svg class="a" style="left:72.7px;top:504.60px" width="9" height="9"><path d="M2.2 4.3 L3.7 5.8 L6.2 3" stroke="#fff" stroke-width="1.3" fill="none"/></svg>
<div class="a gb" style="left:91px;top:500.80px;width:47px;height:16px"><span class="t">6545</span></div>
<div class="a c " style="left:141px;top:499.80px;width:136px;padding:0 4.5px"><span class="t">ОТКЛ. Весы1</span></div>
<div class="a c r b" style="left:277px;top:499.80px;width:53px;padding:0 3.5px"><span class="t">140.20</span></div>
<div class="a c r" style="left:330px;top:499.80px;width:100px;padding:0 3.5px"><span class="t">140.20</span></div>
<div class="a c r dash" style="left:430px;top:499.80px;width:76px;padding:0 3.5px"><span class="t">-</span></div>
<div class="a c r" style="left:506px;top:499.80px;width:92px;padding:0 3.5px"><span class="t">271.80</span></div>
<div class="a c r" style="left:598px;top:499.80px;width:84px;padding:0 3.5px"><span class="t">131.60</span></div>
<div class="a c m" style="left:682px;top:499.80px;width:91px;padding:0 0.0px"><span class="t">12.09.2021 18:21</span></div>
<div class="a c m" style="left:773px;top:499.80px;width:91px;padding:0 0.0px"><span class="t">12.09.2021 18:28</span></div>
<div class="a c " style="left:864px;top:499.80px;width:74px;padding:0 4.5px"><span class="t">МАЗ 853</span></div>
<div class="a c m one" style="left:938px;top:499.80px;width:98px;padding:0 0.0px"><span class="t">1</span></div>
<div class="a c fld" style="left:1036px;top:499.80px;width:90px;padding:0 4.5px"><span class="t">Поле 3/2 (1отд)</span></div>
<div class="a c " style="left:1126px;top:499.80px;width:84px;padding:0 4.5px"><span class="t">Соя</span></div>
<div class="a rl" style="top:538px"></div>
<div class="a c r" style="left:5px;top:519.40px;width:60px;padding:0 3.5px"><span class="t">12741</span></div>
<div class="a chk" style="left:72.7px;top:524.20px"></div>
<svg class="a" style="left:72.7px;top:524.20px" width="9" height="9"><path d="M2.2 4.3 L3.7 5.8 L6.2 3" stroke="#fff" stroke-width="1.3" fill="none"/></svg>
<div class="a gb" style="left:91px;top:520.40px;width:47px;height:16px"><span class="t">6554</span></div>
<div class="a c " style="left:141px;top:519.40px;width:136px;padding:0 4.5px"><span class="t">ОТКЛ. Весы1</span></div>
<div class="a c r b" style="left:277px;top:519.40px;width:53px;padding:0 3.5px"><span class="t">140.00</span></div>
<div class="a c r" style="left:330px;top:519.40px;width:100px;padding:0 3.5px"><span class="t">140.00</span></div>
<div class="a c r dash" style="left:430px;top:519.40px;width:76px;padding:0 3.5px"><span class="t">-</span></div>
<div class="a c r" style="left:506px;top:519.40px;width:92px;padding:0 3.5px"><span class="t">253.00</span></div>
<div class="a c r" style="left:598px;top:519.40px;width:84px;padding:0 3.5px"><span class="t">113.00</span></div>
<div class="a c m" style="left:682px;top:519.40px;width:91px;padding:0 0.0px"><span class="t">12.09.2021 19:10</span></div>
<div class="a c m" style="left:773px;top:519.40px;width:91px;padding:0 0.0px"><span class="t">12.09.2021 19:20</span></div>
<div class="a c " style="left:864px;top:519.40px;width:74px;padding:0 4.5px"><span class="t">Камаз 922</span></div>
<div class="a c m one" style="left:938px;top:519.40px;width:98px;padding:0 0.0px"><span class="t">1</span></div>
<div class="a c fld" style="left:1036px;top:519.40px;width:90px;padding:0 4.5px"><span class="t">Поле 3/2 (1отд)</span></div>
<div class="a c " style="left:1126px;top:519.40px;width:84px;padding:0 4.5px"><span class="t">Соя</span></div>
<div class="a vl" style="left:65px;top:146px;height:376px"></div>
<div class="a vl" style="left:87px;top:146px;height:376px"></div>
<div class="a vl" style="left:141px;top:146px;height:376px"></div>
<div class="a vl" style="left:277px;top:146px;height:376px"></div>
<div class="a vl" style="left:330px;top:146px;height:376px"></div>
<div class="a vl" style="left:430px;top:146px;height:376px"></div>
<div class="a vl" style="left:506px;top:146px;height:376px"></div>
<div class="a vl" style="left:598px;top:146px;height:376px"></div>
<div class="a vl" style="left:682px;top:146px;height:376px"></div>
<div class="a vl" style="left:773px;top:146px;height:376px"></div>
<div class="a vl" style="left:864px;top:146px;height:376px"></div>
<div class="a vl" style="left:938px;top:146px;height:376px"></div>
<div class="a vl" style="left:1036px;top:146px;height:376px"></div>
<div class="a vl" style="left:1126px;top:146px;height:376px"></div>
<div class="a box" style="left:278px;top:123px;width:155px;height:85px"></div>
<div class="a box" style="left:507px;top:116px;width:181px;height:110px"></div>
</body></html>
